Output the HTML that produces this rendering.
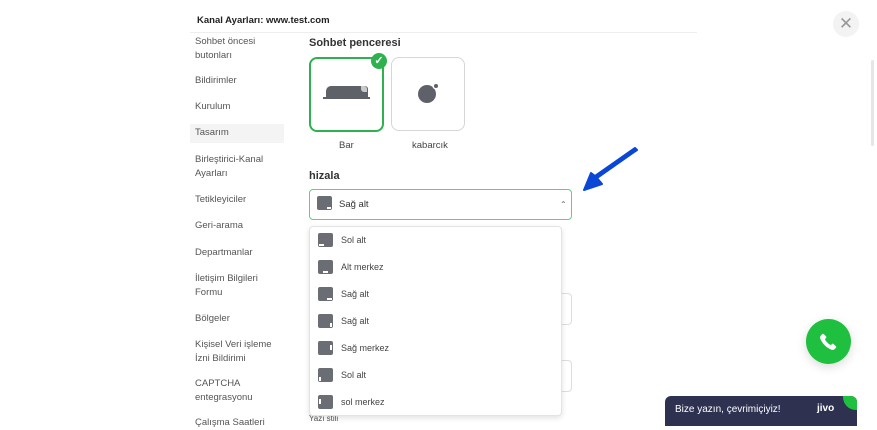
<!DOCTYPE html>
<html><head><meta charset="utf-8"><style>
body{margin:0;width:877px;height:422px;overflow:hidden;background:#fff;font-family:"Liberation Sans",sans-serif;position:relative}
.a{position:absolute}
.sb{font-size:9.5px;color:#555;line-height:14px;left:195px}
.it{position:absolute;left:318px;font-size:9px;color:#444}
.ic{position:absolute;left:318px;width:15px;height:14px;background:#6b6d74;border-radius:2px}
.ic i{position:absolute;background:#fff;display:block}
</style></head><body>
<div class="a" style="left:197px;top:15px;font-size:9.5px;color:#222;font-weight:bold">Kanal Ayarları: www.test.com</div>
<div class="a" style="left:190px;top:32px;width:507px;height:1px;background:#eee"></div>
<div class="a" style="left:190px;top:124px;width:94px;height:19px;background:#f4f4f5"></div>
<div class="a sb" style="top:35px">Sohbet öncesi<br>butonları</div>
<div class="a sb" style="top:74px">Bildirimler</div>
<div class="a sb" style="top:100px">Kurulum</div>
<div class="a sb" style="top:126px">Tasarım</div>
<div class="a sb" style="top:153px">Birleştirici-Kanal<br>Ayarları</div>
<div class="a sb" style="top:193px">Tetikleyiciler</div>
<div class="a sb" style="top:219px">Geri-arama</div>
<div class="a sb" style="top:246px">Departmanlar</div>
<div class="a sb" style="top:272px">İletişim Bilgileri<br>Formu</div>
<div class="a sb" style="top:312px">Bölgeler</div>
<div class="a sb" style="top:338px">Kişisel Veri işleme<br>İzni Bildirimi</div>
<div class="a sb" style="top:377px">CAPTCHA<br>entegrasyonu</div>
<div class="a sb" style="top:416px">Çalışma Saatleri</div>

<div class="a" style="left:309px;top:37px;font-size:11px;font-weight:bold;color:#333">Sohbet penceresi</div>
<div class="a" style="left:309px;top:57px;width:71px;height:71px;border:2px solid #2fb14f;border-radius:8px"></div>
<div class="a" style="left:326px;top:86px;width:42px;height:11px;background:#5f6169;border-radius:5px 3px 0 0"></div>
<div class="a" style="left:361px;top:86px;width:6px;height:6px;background:#c9c9cc;border-radius:0 3px 0 3px"></div>
<div class="a" style="left:323px;top:97px;width:47px;height:2px;background:#5f6169"></div>
<div class="a" style="left:371px;top:53px;width:16px;height:16px;border-radius:50%;background:#2fb14f;color:#fff;font-size:11px;text-align:center;line-height:16px;font-weight:bold">✓</div>
<div class="a" style="left:391px;top:57px;width:72px;height:72px;border:1.5px solid #d6d6d6;border-radius:8px"></div>
<div class="a" style="left:418px;top:85px;width:18px;height:18px;border-radius:50%;background:#5f6169"></div>
<div class="a" style="left:434px;top:84px;width:4px;height:4px;border-radius:50%;background:#5f6169;box-shadow:0 0 0 1.5px #fff"></div>
<div class="a" style="left:339px;top:140px;font-size:9.5px;color:#444">Bar</div>
<div class="a" style="left:412px;top:140px;font-size:9.5px;color:#444">kabarcık</div>

<div class="a" style="left:309px;top:170px;font-size:11px;font-weight:bold;color:#333">hizala</div>
<div class="a" style="left:309px;top:189px;width:261px;height:29px;border:1px solid #5fcf84;border-radius:4px"></div>
<div class="ic" style="top:196px;left:317px"><i style="right:1px;bottom:1px;width:4px;height:2px"></i></div>
<div class="a" style="left:339px;top:199px;font-size:9.5px;color:#333">Sağ alt</div>
<div class="a" style="left:560px;top:200px;font-size:8px;color:#666">⌃</div>

<div class="a" style="left:559px;top:293px;width:12px;height:30px;border:1px solid #ddd;border-left:none;border-radius:0 4px 4px 0"></div>
<div class="a" style="left:559px;top:360px;width:12px;height:30px;border:1px solid #ddd;border-left:none;border-radius:0 4px 4px 0"></div>
<div class="a" style="left:309px;top:414px;font-size:8px;color:#555">Yazı stili</div>

<div class="a" style="left:309px;top:226px;width:251px;height:188px;background:#fff;border:1px solid #e3e3e3;border-radius:4px;box-shadow:0 2px 6px rgba(0,0,0,.12)"></div>
<div class="ic" style="top:233px"><i style="left:1px;bottom:1px;width:5px;height:2px"></i></div><div class="it" style="left:341px;top:235px">Sol alt</div>
<div class="ic" style="top:260px"><i style="left:5px;bottom:1px;width:5px;height:2px"></i></div><div class="it" style="left:341px;top:262px">Alt merkez</div>
<div class="ic" style="top:287px"><i style="right:1px;bottom:1px;width:5px;height:2px"></i></div><div class="it" style="left:341px;top:289px">Sağ alt</div>
<div class="ic" style="top:314px"><i style="right:1px;bottom:1px;width:2px;height:4px"></i></div><div class="it" style="left:341px;top:316px">Sağ alt</div>
<div class="ic" style="top:341px"><i style="right:1px;top:4px;width:2px;height:5px"></i></div><div class="it" style="left:341px;top:343px">Sağ merkez</div>
<div class="ic" style="top:368px"><i style="left:1px;bottom:1px;width:2px;height:4px"></i></div><div class="it" style="left:341px;top:370px">Sol alt</div>
<div class="ic" style="top:395px"><i style="left:1px;top:4px;width:2px;height:5px"></i></div><div class="it" style="left:341px;top:397px">sol merkez</div>

<svg class="a" style="left:580px;top:145px" width="62" height="50"><path d="M57 5 L17 33 L22 39 L4 45 L11 28 L15 31 L55 3 Z" fill="#0a47d6" stroke="#0a47d6" stroke-width="2" stroke-linejoin="round"/></svg>

<div class="a" style="left:833px;top:11px;width:26px;height:26px;border-radius:50%;background:#f3f3f4;color:#999;font-size:17px;text-align:center;line-height:26px">✕</div>
<div class="a" style="left:871px;top:60px;width:3px;height:86px;background:#e6e6e6;border-radius:2px"></div>

<div class="a" style="left:806px;top:319px;width:45px;height:45px;border-radius:50%;background:#1fbf3f;box-shadow:0 3px 10px rgba(0,0,0,.15)"></div>
<svg class="a" style="left:818px;top:331px" width="21" height="21" viewBox="0 0 24 24"><path d="M6.6 3.5l2.6 2.7c.5.5.5 1.3 0 1.8L7.9 9.3c1.2 2.7 3.9 5.5 6.8 6.8l1.3-1.3c.5-.5 1.3-.5 1.8 0l2.7 2.6c.5.5.5 1.3 0 1.8l-1.5 1.5c-1 1-2.6 1.2-3.9.6C9.6 19 5 14.4 2.7 9c-.6-1.3-.4-2.9.6-3.9l1.5-1.5c.5-.5 1.3-.5 1.8-.1z" fill="#fff"/></svg>

<div class="a" style="left:665px;top:396px;width:192px;height:30px;background:#2e3150;border-radius:6px 6px 0 0;overflow:hidden">
<div class="a" style="right:-12px;top:-12px;width:26px;height:26px;border-radius:50%;background:#1fbf3f"></div>
<div class="a" style="left:10px;top:8px;font-size:10px;color:#fff">Bize yazın, çevrimiçiyiz!</div>
<div class="a" style="left:152px;top:7px;font-size:10px;color:#fff;font-weight:bold">jivo</div>
</div>
</body></html>
